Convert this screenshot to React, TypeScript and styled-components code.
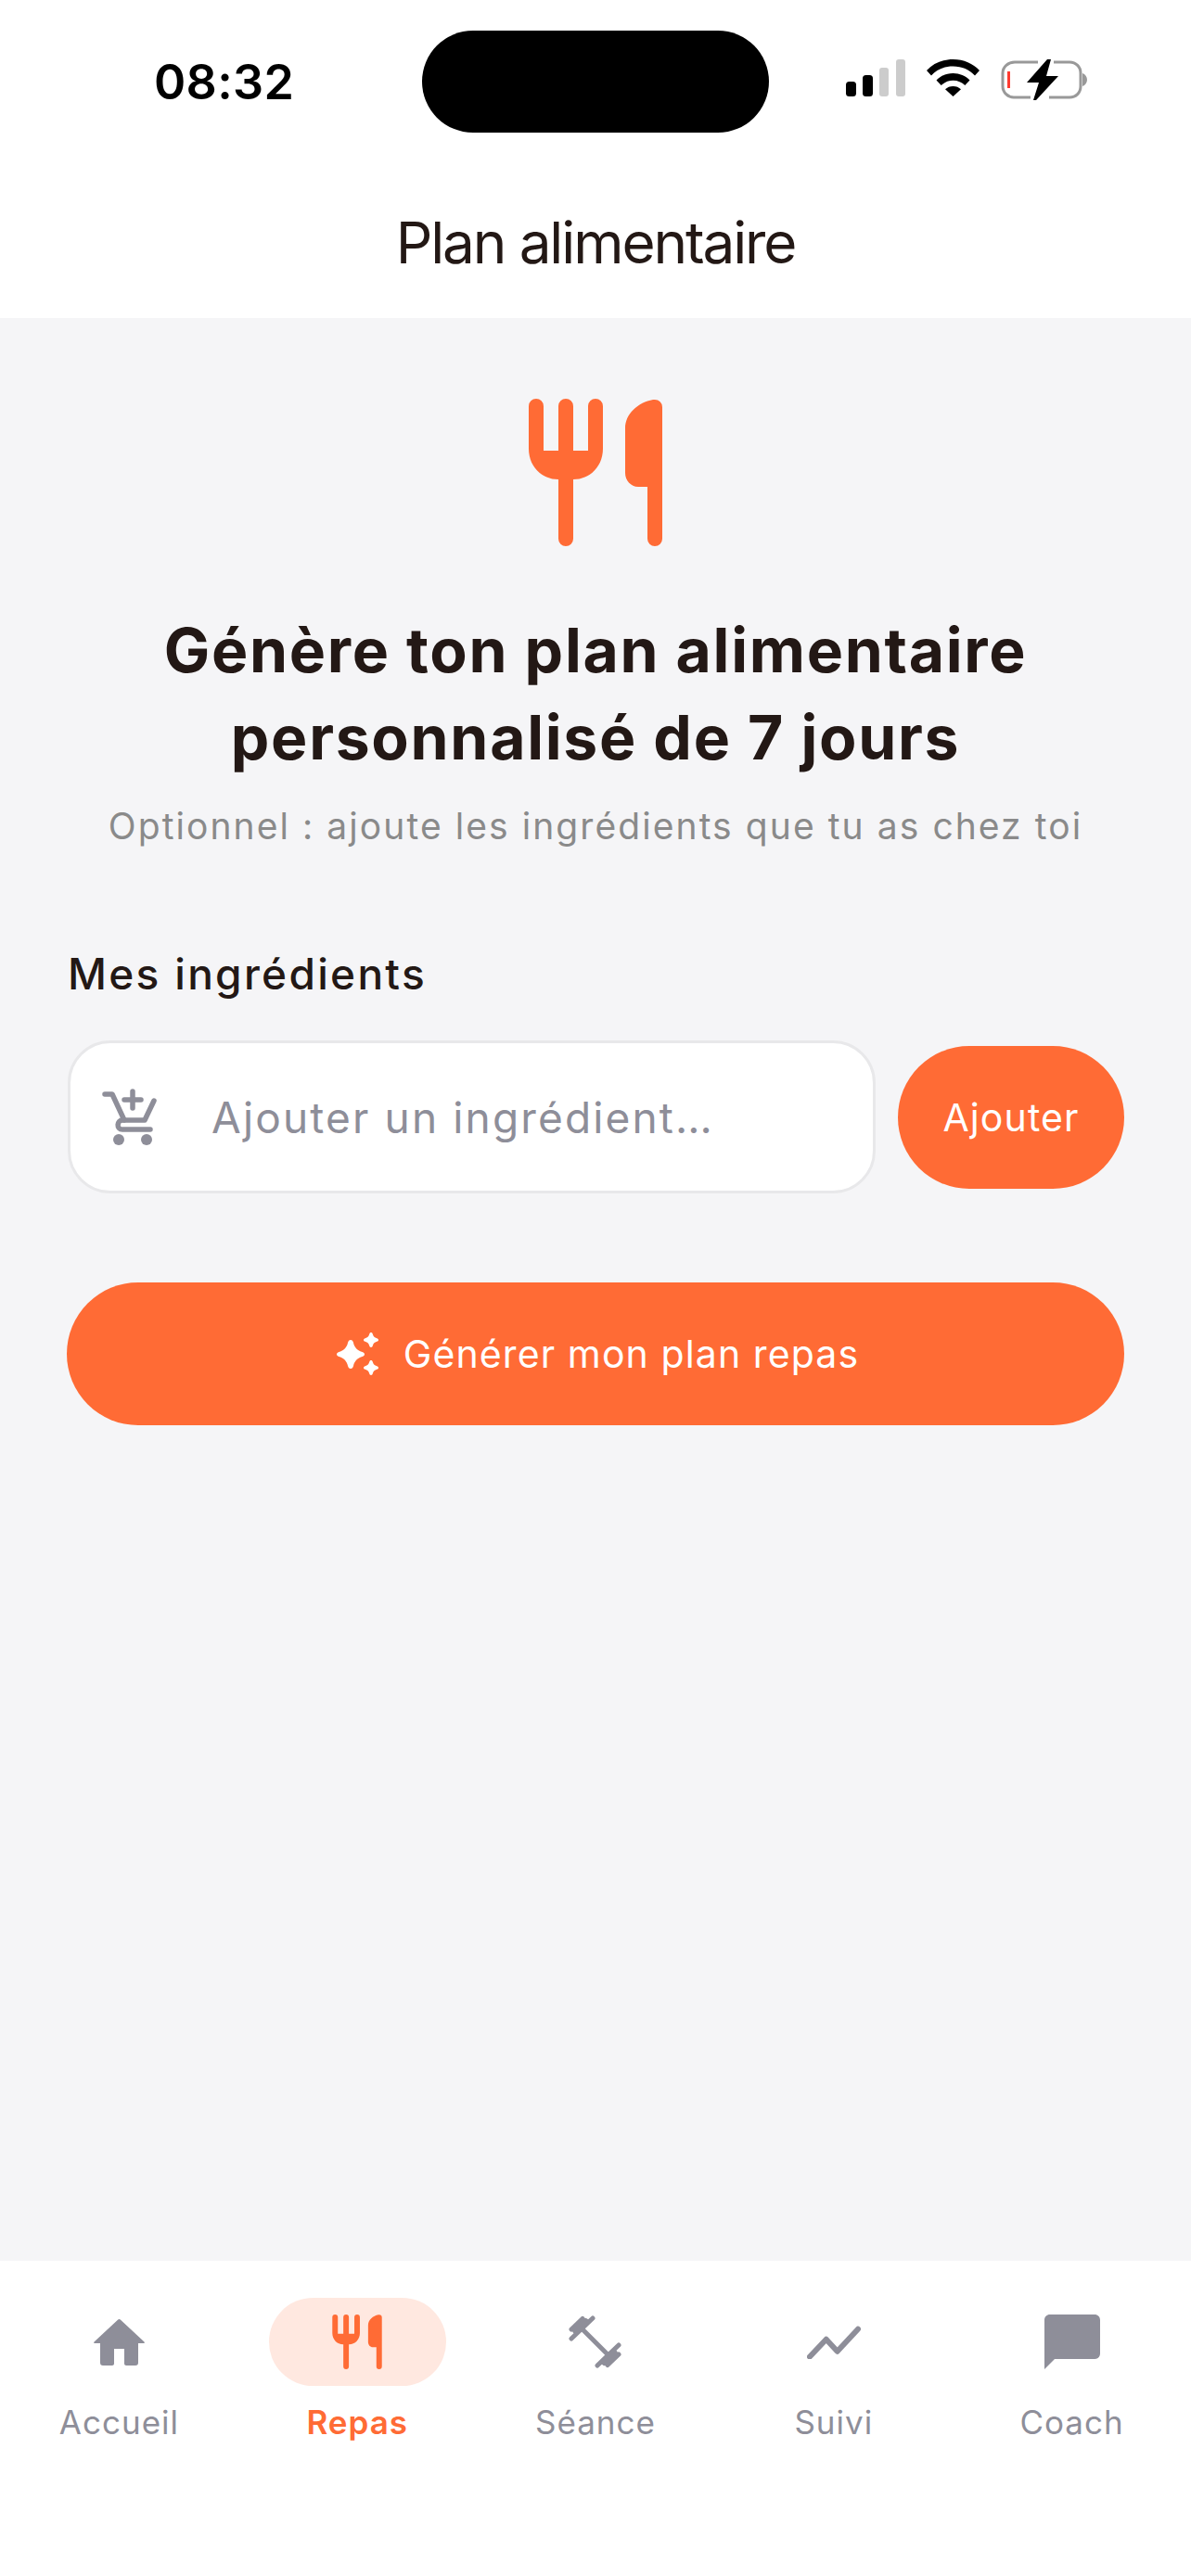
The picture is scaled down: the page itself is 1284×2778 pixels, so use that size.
import React from 'react';
import styled, { createGlobalStyle } from 'styled-components';

const ORANGE = '#ff6b35';
const GREY = '#8e8e99';
const INK = '#231815';

const GlobalStyle = createGlobalStyle`
  html, body {
    margin: 0;
    padding: 0;
    background: #fff;
  }
  * {
    box-sizing: border-box;
  }
`;

const Screen = styled.div`
  width: 1284px;
  height: 2778px;
  display: flex;
  flex-direction: column;
  background: #f5f5f7;
  font-family: Inter, 'Noto Sans', sans-serif;
  overflow: hidden;
`;

const StatusBar = styled.div`
  height: 176px;
  flex: none;
  padding-top: 33px;
  background: #fff;
  display: grid;
  grid-template-columns: 455px 374px 1fr;
  align-items: start;
`;

const Time = styled.div`
  padding: 26px 0 0 166px;
  font-size: 52px;
  line-height: 60px;
  font-weight: 600;
  letter-spacing: 0.3px;
  color: #000;
`;

const Island = styled.div`
  height: 110px;
  border-radius: 55px;
  background: #000;
`;

const StatusIcons = styled.div`
  padding: 31px 0 0 83px;
  display: flex;
  align-items: flex-start;
  gap: 23px;
`;

const Header = styled.header`
  height: 167px;
  flex: none;
  background: #fff;
  text-align: center;
`;

const HeaderTitle = styled.h1`
  margin: 0;
  font-size: 62px;
  line-height: 172px;
  font-weight: 400;
  letter-spacing: -2.1px;
  color: ${INK};
`;

const Main = styled.main`
  flex: 1;
  padding: 87px 72px 0;
  display: flex;
  flex-direction: column;
`;

const Hero = styled.div`
  display: flex;
  flex-direction: column;
  align-items: center;
`;

const Heading = styled.h2`
  margin: 65px 0 0;
  text-align: center;
  font-size: 66px;
  line-height: 94px;
  font-weight: 700;
  letter-spacing: 1.7px;
  color: ${INK};
`;

const Subtitle = styled.p`
  margin: 24px 0 0;
  text-align: center;
  font-size: 39px;
  line-height: 50px;
  font-weight: 400;
  letter-spacing: 2.07px;
  color: #8a8a8a;
`;

const Label = styled.div`
  margin-top: 106px;
  padding-left: 1px;
  font-size: 46px;
  line-height: 56px;
  font-weight: 500;
  letter-spacing: 2.3px;
  color: ${INK};
`;

const InputRow = styled.div`
  margin-top: 44px;
  display: flex;
  align-items: center;
  gap: 24px;
`;

const InputBox = styled.div`
  width: 871px;
  height: 165px;
  margin-left: 1px;
  flex: none;
  display: flex;
  align-items: center;
  padding-left: 34px;
  gap: 58px;
  background: #fff;
  border: 3px solid #e8e8ea;
  border-radius: 46px;
`;

const Placeholder = styled.span`
  font-size: 46px;
  letter-spacing: 2.15px;
  color: ${GREY};
`;

const PillButton = styled.div<{ $wide?: boolean }>`
  height: 154px;
  width: ${(p) => (p.$wide ? '100%' : '244px')};
  flex: none;
  display: flex;
  align-items: center;
  justify-content: center;
  gap: 27px;
  border-radius: 77px;
  background: ${ORANGE};
  color: #fff;
  font-size: 41px;
  font-weight: 400;
  letter-spacing: 1.1px;
`;

const GenerateButton = styled(PillButton)`
  margin-top: 96px;
  padding-left: 5px;
`;

const TabBar = styled.nav`
  height: 340px;
  flex: none;
  padding-top: 40px;
  background: #fff;
  display: grid;
  grid-template-columns: repeat(5, 1fr);
`;

const Tab = styled.div`
  display: flex;
  flex-direction: column;
  align-items: center;
`;

const TabIcon = styled.div<{ $active?: boolean }>`
  width: 191px;
  height: 95px;
  border-radius: 48px;
  display: flex;
  align-items: center;
  justify-content: center;
  background: ${(p) => (p.$active ? '#ffe8e0' : 'transparent')};
`;

const TabLabel = styled.div<{ $active?: boolean }>`
  margin-top: 14px;
  font-size: 35px;
  line-height: 50px;
  letter-spacing: 1px;
  font-weight: ${(p) => (p.$active ? 600 : 400)};
  color: ${(p) => (p.$active ? ORANGE : GREY)};
`;

const CutleryIcon = ({ width, height, color }: { width: number; height: number; color: string }) => (
  <svg width={width} height={height} viewBox="0 0 144 159" fill={color}>
    <path d="M8 0a8 8 0 0 1 8 8v48h16V8a8 8 0 0 1 16 0v48h16V8a8 8 0 0 1 16 0v46c0 18-13 33-32 33v64a8 8 0 0 1-16 0V87C13 87 0 72 0 54V8a8 8 0 0 1 8-8z" />
    <path d="M136 1a8 8 0 0 1 8 8v142a8 8 0 0 1-16 0V95h-10c-8 0-14-7-14-15V32c0-16 14-28 30-31z" />
  </svg>
);

const SignalIcon = () => (
  <svg width="64" height="40" viewBox="0 0 64 40">
    <rect x="0" y="24" width="11" height="16" rx="3.5" fill="#000" />
    <rect x="18" y="17" width="11" height="23" rx="3.5" fill="#000" />
    <rect x="36" y="9" width="10" height="31" rx="3" fill="#ccc" />
    <rect x="54" y="0" width="10" height="40" rx="3" fill="#ccc" />
  </svg>
);

const WifiIcon = () => (
  <svg width="57" height="40" viewBox="0 0 57 40" fill="#000">
    <path d="M28.5 0C40 0 50 4.500 57 12l-5 5.500C46 11 38 7.500 28.500 7.500S11 11 5 17.500L0 12C7 4.500 17 0 28.500 0z" />
    <path d="M28.500 15c7 0 13.500 2.800 18 7.500l-5.200 5.600c-3.300-3.400-7.800-5.400-12.800-5.400s-9.500 2-12.800 5.400l-5.200-5.600c4.500-4.700 11-7.500 18-7.500z" />
    <path d="M28.500 29c3.300 0 6.300 1.200 8.500 3.300L28.500 40 20 32.300c2.200-2.100 5.200-3.300 8.500-3.300z" />
  </svg>
);

const BatteryIcon = () => (
  <svg width="93" height="44" viewBox="0 0 93 44">
    <path
      d="M40 3H15C8 3 2 8 2 15v14c0 7 6 12 12 12h18M52 41h22c7 0 12-5 12-12V15c0-7-5-12-12-12H57"
      fill="none"
      stroke="#999"
      strokeWidth="3"
    />
    <path d="M88 15c3 1 5 4 5 7s-2 6-5 7z" fill="#999" />
    <rect x="7" y="13" width="3" height="18" fill="#ff3b30" />
    <path d="M50 0h4L49 18h13L38 44h-3l6-19H28z" fill="#000" />
  </svg>
);

const CartPlusIcon = () => (
  <svg width="60" height="62" viewBox="0 0 60 62" fill="none" stroke={GREY} strokeWidth="5.500" strokeLinecap="round" strokeLinejoin="round">
    <path d="M3 6h8l13 28" />
    <path d="M56 13l-10 21H22c-6 0-7 10 0 10h30" />
    <path d="M33 3v18M24 12h18" />
    <circle cx="18" cy="55" r="6" fill={GREY} stroke="none" />
    <circle cx="48" cy="55" r="6" fill={GREY} stroke="none" />
  </svg>
);

const SparkleIcon = () => (
  <svg width="45" height="46" viewBox="0 0 45 46" fill="#fff">
    <path d="M15 8c1.500 0 2.500 1 3 3 1 4.500 3.500 8 9.500 10 2 .7 2.500 1.500 2.500 2.500s-.5 1.800-2.500 2.500c-6 2-8.500 5.500-9.500 10-.5 2-1.500 3-3 3s-2.500-1-3-3c-1-4.500-3.500-8-9.500-10C.5 25.300 0 24.500 0 23.500s.5-1.800 2.500-2.500c6-2 8.500-5.500 9.500-10 .5-2 1.500-3 3-3z" />
    <path d="M37 0c1 0 1.500.7 1.800 1.700.8 2.500 2 3.700 4.500 4.500 1 .3 1.700.8 1.700 1.800s-.7 1.500-1.700 1.800c-2.500.8-3.700 2-4.500 4.500-.3 1-.8 1.700-1.800 1.700s-1.500-.7-1.800-1.700c-.8-2.500-2-3.700-4.500-4.500-1-.3-1.700-.8-1.700-1.800s.7-1.500 1.700-1.800c2.500-.8 3.700-2 4.500-4.500.3-1 .8-1.700 1.800-1.700z" />
    <path d="M37 30c1 0 1.500.7 1.800 1.700.8 2.500 2 3.700 4.500 4.500 1 .3 1.700.8 1.700 1.800s-.7 1.500-1.700 1.800c-2.500.8-3.700 2-4.500 4.500-.3 1-.8 1.700-1.800 1.700s-1.500-.7-1.800-1.700c-.8-2.500-2-3.700-4.500-4.500-1-.3-1.700-.8-1.700-1.800s.7-1.500 1.700-1.800c2.500-.8 3.700-2 4.500-4.500.3-1 .8-1.700 1.800-1.700z" />
  </svg>
);

const HomeIcon = () => (
  <svg width="55" height="50" viewBox="0 0 55 50" fill={GREY}>
    <path d="M27.500 0c.6 0 1 .3 1.500.8l25.500 23.700c.8.800.4 1.500-.8 1.500H48v21c0 2-1 3-3 3H35c-1 0-2-1-2-2V32H22v16c0 1-1 2-2 2H10c-2 0-3-1-3-3V26H1.300C.1 26-.3 25.300.5 24.500L26 .8c.5-.5.900-.8 1.500-.8z" />
  </svg>
);

const DumbbellIcon = () => (
  <svg width="57" height="57" viewBox="0 0 57 57" fill="none" stroke={GREY} strokeLinecap="round">
    <path d="M14 14l29 29" strokeWidth="5" />
    <path d="M3 25L26 3" strokeWidth="5" />
    <path d="M3 15L15 3.500" strokeWidth="5" />
    <path d="M8 16L18 7" strokeWidth="8" />
    <path d="M54 32L31 54" strokeWidth="5" />
    <path d="M54 42L42 53.500" strokeWidth="5" />
    <path d="M49 41L39 50" strokeWidth="8" />
  </svg>
);

const TrendIcon = () => (
  <svg width="58" height="37" viewBox="0 0 58 37" fill="none" stroke={GREY} strokeWidth="6" strokeLinecap="round" strokeLinejoin="round">
    <path d="M3 34.500L20.700 15.700 32.700 28.700 55 4.700" />
  </svg>
);

const ChatIcon = () => (
  <svg width="60" height="59" viewBox="0 0 60 59" fill={GREY}>
    <path d="M6 0h48c3.500 0 6 2.500 6 6v36c0 3.500-2.500 6-6 6H11L0 59V6c0-3.500 2.500-6 6-6z" />
  </svg>
);

const tabs = [
  { label: 'Accueil', icon: <HomeIcon /> },
  { label: 'Repas', icon: <CutleryIcon width={54} height={59} color={ORANGE} />, active: true },
  { label: 'Séance', icon: <DumbbellIcon /> },
  { label: 'Suivi', icon: <TrendIcon /> },
  { label: 'Coach', icon: <ChatIcon /> },
];

export default function App() {
  return (
    <Screen>
      <GlobalStyle />
      <StatusBar>
        <Time>08:32</Time>
        <Island />
        <StatusIcons>
          <SignalIcon />
          <WifiIcon />
          <BatteryIcon />
        </StatusIcons>
      </StatusBar>
      <Header>
        <HeaderTitle>Plan alimentaire</HeaderTitle>
      </Header>
      <Main>
        <Hero>
          <CutleryIcon width={144} height={159} color={ORANGE} />
          <Heading>
            Génère ton plan alimentaire
            <br />
            personnalisé de 7 jours
          </Heading>
          <Subtitle>Optionnel : ajoute les ingrédients que tu as chez toi</Subtitle>
        </Hero>
        <Label>Mes ingrédients</Label>
        <InputRow>
          <InputBox>
            <CartPlusIcon />
            <Placeholder>Ajouter un ingrédient…</Placeholder>
          </InputBox>
          <PillButton>Ajouter</PillButton>
        </InputRow>
        <GenerateButton $wide>
          <SparkleIcon />
          Générer mon plan repas
        </GenerateButton>
      </Main>
      <TabBar>
        {tabs.map((tab) => (
          <Tab key={tab.label}>
            <TabIcon $active={tab.active}>{tab.icon}</TabIcon>
            <TabLabel $active={tab.active}>{tab.label}</TabLabel>
          </Tab>
        ))}
      </TabBar>
    </Screen>
  );
}
